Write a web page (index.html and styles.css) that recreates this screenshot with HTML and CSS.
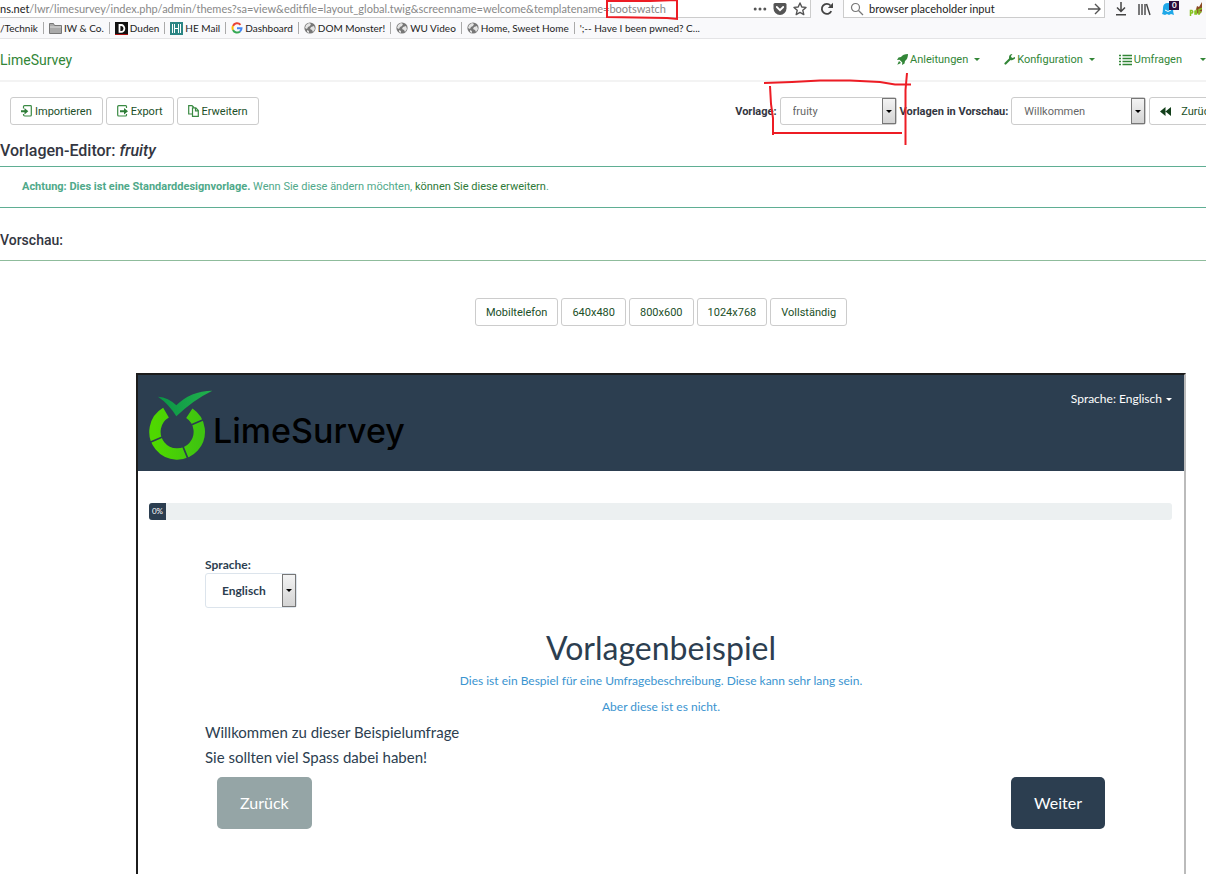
FILE: index.html
```
<!DOCTYPE html>
<html lang="de">

<head>
  <meta charset="UTF-8">
  <meta name="viewport" content="width=device-width, initial-scale=1.0">
  <title>LimeSurvey - Vorlagen-Editor</title>
  <link rel="stylesheet" href="styles.css">
</head>

<body>
  <!-- shared icons -->
  <svg class="sprite" width="0" height="0" aria-hidden="true">
    <symbol id="globe" viewBox="0 0 12 12">
      <circle cx="6" cy="6" r="5.6" fill="#777" />
      <path d="M2 3l3-2 2 1-1 2-2 1-1 2-2-1zM7 5l3-1 1 3-2 3-1-2-2-1zM3 8l2 1v2L3 10z" fill="#e4e4e4" />
    </symbol>
    <symbol id="caret" viewBox="0 0 6 3">
      <path d="M0 0h6L3 3z" fill="currentColor" />
    </symbol>
  </svg>

  <div class="browser">
    <div class="address-row">
      <div class="url-box">
        <label class="url-domain" for="url">ns.net</label>
        <input class="url-input" type="text" id="url" value="/lwr/limesurvey/index.php/admin/themes?sa=view&amp;editfile=layout_global.twig&amp;screenname=welcome&amp;templatename=bootswatch">
        <button class="icon-button" aria-label="Mehr">
          <svg width="14" height="14" viewBox="0 0 14 14" fill="#555"><circle cx="2.2" cy="7" r="1.5" /><circle cx="7" cy="7" r="1.5" /><circle cx="11.8" cy="7" r="1.5" /></svg>
        </button>
        <button class="icon-button" aria-label="Pocket">
          <svg width="14" height="14" viewBox="0 0 14 14"><path d="M2 1h10q1.500 0 1.500 1.500V6.500a6.500 6.500 0 0 1-13 0V2.500Q.5 1 2 1z" fill="#555" /><path d="M3.800 5L7 8.200 10.200 5" fill="none" stroke="#fff" stroke-width="1.800" stroke-linecap="round" /></svg>
        </button>
        <button class="icon-button" aria-label="Lesezeichen">
          <svg width="14" height="14" viewBox="0 0 14 14"><path d="M7 1l1.800 4 4.200.4-3.200 2.900 1 4.300L7 10.400l-3.800 2.200 1-4.300L1 5.400 5.200 5z" fill="none" stroke="#555" stroke-width="1.400" stroke-linejoin="round" /></svg>
        </button>
      </div>
      <button class="icon-button reload" aria-label="Neu laden">
        <svg width="14" height="14" viewBox="0 0 14 14"><path d="M11.300 9.200A5 5 0 1 1 10.500 3.500" fill="none" stroke="#444" stroke-width="1.800" /><path d="M13 .8V6H7.800z" fill="#444" /></svg>
      </button>
      <div class="search-box">
        <svg width="14" height="14" viewBox="0 0 14 14" fill="none" stroke="#777" stroke-width="1.200"><circle cx="5.500" cy="5.500" r="4" /><path d="M8.500 8.500L13 13" /></svg>
        <input class="search-input" type="text" aria-label="Suchen" value="browser placeholder input">
        <button class="icon-button" aria-label="Suche starten">
          <svg width="14" height="14" viewBox="0 0 14 14"><path d="M1 7h12M8 2l5 5-5 5" fill="none" stroke="#555" stroke-width="1.400" /></svg>
        </button>
      </div>
      <div class="browser-tools">
        <button class="icon-button" aria-label="Downloads">
          <svg width="14" height="14" viewBox="0 0 14 14"><path d="M7 0v9M3 5.500L7 9.500l4-4M2 12.800h10" fill="none" stroke="#444" stroke-width="1.500" /></svg>
        </button>
        <button class="icon-button" aria-label="Bibliothek">
          <svg width="14" height="14" viewBox="0 0 14 14"><path d="M2 2v11M5 2v11M8 2v11M9.500 2l3.500 11" fill="none" stroke="#444" stroke-width="1.400" /></svg>
        </button>
        <button class="icon-button" aria-label="Ghostery">
          <svg width="20" height="16" viewBox="0 0 20 16"><path d="M2 13q1-2 1-6 0-5 5-5t5 5 1 7l-3-1-2 1-2-1-2 1z" fill="#1fa8e8" /><path d="M5 9q3 3 6 0" fill="none" stroke="#fff" /><path d="M9 0h10v9H9z" fill="#2c0d3c" /><text class="badge-text" x="12" y="7">0</text></svg>
        </button>
        <button class="icon-button" aria-label="PDF">
          <svg width="14" height="16" viewBox="0 0 14 16"><path d="M6 12L8 5l2 1 3-5 0 9-2 3z" fill="#8a4a24" /><path d="M1.500 15V9.500h1.500q1.500 1.300 0 2.600H2M6 9.500v3.500h1.500V8.500M10 14V8.500l3-1M10 11h2.500" fill="none" stroke="#86c322" stroke-width="1.500" /></svg>
        </button>
      </div>
    </div>

    <nav class="bookmarks">
      <a href="#">/Technik</a>
      <a href="#"><svg width="13" height="12" viewBox="0 0 13 12"><path d="M.5 1.500h4l1 2h7v8H.5z" fill="#aaa" stroke="#777" /><path d="M1 5h11" stroke="#ddd" /></svg>IW &amp; Co.</a>
      <a href="#"><svg width="13" height="13" viewBox="0 0 13 13"><path d="M0 0h13v13H0z" fill="#111" /><path d="M0 12h13v1H0z" fill="#a11" /><path d="M4.500 3h1.800a3 3.300 0 0 1 0 6.800H4.500z" fill="none" stroke="#fff" stroke-width="1.800" /></svg>Duden</a>
      <a href="#"><svg width="13" height="13" viewBox="0 0 13 13"><path d="M0 0h13v13H0z" fill="#2b8584" /><path d="M2.500 2v9M4.500 2v9M8.500 2v9M10.500 2v9M4.500 6.500h4" stroke="#fff" fill="none" /></svg>HE Mail</a>
      <a href="#"><svg width="12" height="12" viewBox="0 0 12 12" fill="none" stroke-width="2"><path d="M9.500 2.800A4.500 4.500 0 0 0 2 4" stroke="#e94335" /><path d="M2 4a4.500 4.500 0 0 0 0 4" stroke="#fbbc05" /><path d="M2 8a4.500 4.500 0 0 0 7 1.500" stroke="#34a853" /><path d="M9 9.500a4.500 4.500 0 0 0 1.500-3.300H6" stroke="#4285f4" /></svg>Dashboard</a>
      <a href="#"><svg width="12" height="12"><use href="#globe" /></svg>DOM Monster!</a>
      <a href="#"><svg width="12" height="12"><use href="#globe" /></svg>WU Video</a>
      <a href="#"><svg width="12" height="12"><use href="#globe" /></svg>Home, Sweet Home</a>
      <a href="#">';-- Have I been pwned? C...</a>
    </nav>
  </div>

  <header class="navbar">
    <a class="brand" href="#">LimeSurvey</a>
    <nav class="menu">
      <a href="#"><svg width="11" height="11" viewBox="0 0 11 11"><path d="M11 0Q6 0 4 3L1.500 3.500 0 6l2.500-.3L5.300 8.500 5 11l2.500-1.500L8 7q3-2 3-7zM2 7L.3 10.700 4 9z" fill="currentColor" /></svg>Anleitungen<svg class="caret" width="6" height="3"><use href="#caret" /></svg></a>
      <a href="#"><svg width="11" height="11" viewBox="0 0 11 11"><path d="M1.500 9.500L6.500 4.500" stroke="currentColor" stroke-width="2.200" stroke-linecap="round" /><path d="M8.500 0Q5 0 5 3.500T8.500 6 11 3L8.500 4 7 3l.3-1.500z" fill="currentColor" /></svg>Konfiguration<svg class="caret" width="6" height="3"><use href="#caret" /></svg></a>
      <a href="#"><svg width="13" height="12" viewBox="0 0 13 12"><path d="M0 1.500h2M3.500 1.500H13M0 4.500h2M3.500 4.500H13M0 7.500h2M3.500 7.500H13M0 10.500h2M3.500 10.500H13" stroke="currentColor" stroke-width="1.600" /></svg>Umfragen<svg class="caret caret-far" width="6" height="3"><use href="#caret" /></svg></a>
    </nav>
  </header>

  <main>
    <div class="toolbar">
      <button class="btn"><svg width="11" height="12" viewBox="0 0 11 12"><path d="M2.500 3.500v-2Q2.500.7 3.500.7h6q.8 0 .8.800v8.500q0 1-1 1h-5.500q-1.300 0-1.300-1.500V9" fill="none" stroke="#3a8a43" stroke-width="1.200" /><path d="M0 5.200h3.500V3l3.800 3.200L3.500 9.400V7.300H0z" fill="#2e7d37" /></svg>Importieren</button>
      <button class="btn"><svg width="11" height="12" viewBox="0 0 11 12"><path d="M9.500 3V1.500q0-.8-.8-.8h-7q-1 0-1 1V10q0 1 1 1h6.800q1 0 1-1V9" fill="none" stroke="#3a8a43" stroke-width="1.200" /><path d="M3 5.200h4V3l4 3.200L7 9.400V7.300H3z" fill="#2e7d37" /></svg>Export</button>
      <button class="btn"><svg width="11" height="12" viewBox="0 0 11 12" fill="none" stroke="#3a8a43" stroke-width="1.200"><path d="M4 9H.7V.7H4L6 2.500" /><path d="M4.500 2.800h3.300l2.500 2.600v5.900H4.500zM7.500 3v2.800h2.600" /></svg>Erweitern</button>
      <div class="toolbar-right">
        <label for="template">Vorlage:</label>
        <div class="select select-template">
          <select id="template">
            <option>fruity</option>
            <option>bootswatch</option>
          </select>
          <span class="arrow"><svg width="6" height="3"><use href="#caret" /></svg></span>
        </div>
        <label for="screen">Vorlagen in Vorschau:</label>
        <div class="select select-screen">
          <select id="screen">
            <option>Willkommen</option>
          </select>
          <span class="arrow"><svg width="6" height="3"><use href="#caret" /></svg></span>
        </div>
        <button class="btn btn-back"><svg width="11" height="9" viewBox="0 0 11 9"><path d="M5.500 0v9L0 4.500zM11 0v9L5.500 4.500z" fill="#123f1a" /></svg>Zurück</button>
      </div>
    </div>

    <h1 class="page-title">Vorlagen-Editor: <em>fruity</em></h1>
    <div class="alert"><strong>Achtung: Dies ist eine Standarddesignvorlage.</strong> Wenn Sie diese ändern möchten, <a href="#">können Sie diese erweitern</a>.</div>
    <h2 class="section-title">Vorschau:</h2>

    <section class="preview">
      <div class="sizes">
        <button class="btn">Mobiltelefon</button>
        <button class="btn">640x480</button>
        <button class="btn">800x600</button>
        <button class="btn">1024x768</button>
        <button class="btn">Vollständig</button>
      </div>

      <div class="frame">
        <div class="survey-header">
          <div class="logo">
            <svg width="65" height="72" viewBox="55 85 195 216">
              <defs>
                <linearGradient id="leaf"><stop offset="0" stop-color="#0a9446" /><stop offset="1" stop-color="#22b24c" /></linearGradient>
                <linearGradient id="ring"><stop offset="0" stop-color="#4fd800" /><stop offset="1" stop-color="#3fc410" /></linearGradient>
              </defs>
              <path d="M179 158A66.500 66.500 0 1 1 109 156" fill="none" stroke="url(#ring)" stroke-width="34" />
              <path d="M184 193L226 175M58 246L100 228M160 258L178 302" stroke="#2c3e50" stroke-width="5" />
              <path d="M85 108Q116 110 140 134Q182 91 248 90Q190 118 140 167Q118 130 85 108z" fill="url(#leaf)" />
            </svg>
            <span>LimeSurvey</span>
          </div>
          <a class="language-link" href="#">Sprache: Englisch<svg class="caret" width="6" height="3"><use href="#caret" /></svg></a>
        </div>
        <div class="progress"><div class="progress-bar">0%</div></div>

        <form class="survey">
          <label class="language-label" for="language">Sprache:</label>
          <div class="select select-language">
            <select id="language">
              <option>Englisch</option>
            </select>
            <span class="arrow"><svg width="6" height="3"><use href="#caret" /></svg></span>
          </div>
          <h1 class="survey-title">Vorlagenbeispiel</h1>
          <p class="description">Dies ist ein Bespiel für eine Umfragebeschreibung. Diese kann sehr lang sein.</p>
          <p class="description">Aber diese ist es nicht.</p>
          <p class="welcome">Willkommen zu dieser Beispielumfrage<br>Sie sollten viel Spass dabei haben!</p>
          <div class="survey-buttons">
            <button type="button" class="survey-btn btn-previous">Zurück</button>
            <button type="button" class="survey-btn">Weiter</button>
          </div>
        </form>
      </div>
    </section>
  </main>

  <!-- red pen marks over the page -->
  <svg class="marks" width="1206" height="150" viewBox="0 0 1206 150" aria-hidden="true">
    <path d="M606 1H650L677 0V19L667 18 607 17V1" />
    <path d="M764 83L792 82 820 80.500H850L880 82 895 84.500H911M770 86L771 104 773 118V135M772 133H902M907 73L905.500 90V145" />
  </svg>
</body>

</html>
```
FILE: styles.css
```
* {
  box-sizing: border-box;
}

body {
  margin: 0;
  position: relative;
  overflow-x: hidden;
  background: #fff;
  color: #333641;
  font-family: Roboto, "Liberation Sans", sans-serif;
  font-size: 11px;
}

a {
  color: inherit;
  text-decoration: none;
}

button,
input,
select {
  font: inherit;
  color: inherit;
}

svg {
  flex: none;
}

.sprite {
  position: absolute;
}

/* browser bars */
.browser {
  background: #f9f9fb;
  border-bottom: 1px solid #e4e4e6;
  color: #222;
  font-family: Lato, "Open Sans", sans-serif;
  white-space: nowrap;
}

.address-row {
  display: flex;
  height: 18px;
}

.url-box,
.search-box {
  display: flex;
  align-items: center;
  background: #fff;
  border: 1px solid #ccc;
  border-top: 0;
}

.url-box {
  flex: 1;
  border-left: 0;
  gap: 6px;
  padding-right: 3px;
}

.url-input,
.search-input {
  flex: 1;
  min-width: 0;
  padding: 0;
  border: 0;
  background: none;
  outline: 0;
}

.url-input {
  color: #888;
  margin-left: -6px;
}

.icon-button {
  display: flex;
  padding: 0;
  border: 0;
  background: none;
}

.reload {
  align-items: center;
  padding: 0 9px;
}

.search-box {
  width: 262px;
  gap: 5px;
  padding: 0 3px 0 6px;
}

.browser-tools {
  display: flex;
  align-items: center;
  gap: 9px;
  padding: 0 3px 0 9px;
}

.badge-text {
  fill: #fff;
  font-size: 8px;
  font-weight: bold;
}

.bookmarks {
  display: flex;
  align-items: center;
  height: 20px;
  font-size: 10px;
}

.bookmarks a {
  display: flex;
  align-items: center;
  gap: 2px;
  height: 12px;
  padding: 0 5px;
  border-left: 1px solid #aaa;
}

.bookmarks a:first-child {
  padding-left: 0;
  border-left: 0;
}

/* admin navigation */
.navbar {
  display: flex;
  align-items: center;
  justify-content: space-between;
  height: 43px;
  border-bottom: 2px solid #f3f3f3;
  color: #328637;
  white-space: nowrap;
}

.brand {
  font-size: 14px;
}

.menu {
  display: flex;
  gap: 24px;
}

.menu a {
  display: flex;
  align-items: center;
  gap: 2px;
}

.caret {
  margin-left: 4px;
}

.caret-far {
  margin-left: 16px;
}

/* toolbar */
.toolbar {
  display: flex;
  gap: 3px;
  margin: 15px -20px 0 10px;
  white-space: nowrap;
}

.btn {
  display: flex;
  align-items: center;
  gap: 3px;
  height: 28px;
  padding: 0 10px;
  background: #fff;
  border: 1px solid #ccc;
  border-radius: 3px;
  color: #214f28;
}

.btn-back {
  gap: 10px;
}

.toolbar-right {
  display: flex;
  align-items: center;
  gap: 3px;
  margin-left: auto;
  font-weight: bold;
}

.toolbar-right .btn {
  font-weight: normal;
}

.select {
  display: flex;
  height: 28px;
  border: 1px solid #ccc;
  border-radius: 3px;
}

.select select {
  flex: 1;
  min-width: 0;
  padding: 0 0 0 12px;
  border: 0;
  background: none;
  color: #666;
  font-weight: normal;
  appearance: none;
}

.select-template {
  width: 117px;
}

.select-screen {
  width: 135px;
}

.arrow {
  display: flex;
  align-items: center;
  justify-content: center;
  width: 14px;
  background: linear-gradient(#f3f3f3, #d4d4d4);
  border: 1px solid #777;
  color: #000;
}

.page-title,
.section-title {
  margin: 0;
  font-weight: 500;
}

.page-title {
  margin-top: 16px;
  font-size: 16px;
  line-height: 20px;
}

.alert {
  margin-top: 5px;
  padding: 0 22px;
  border: solid #5fae93;
  border-width: 1px 0;
  color: #4fa98a;
  line-height: 40px;
}

.alert a {
  color: #2e7a38;
}

.section-title {
  margin-top: 22px;
  font-size: 14px;
  line-height: 20px;
}

/* preview */
.preview {
  margin-top: 10px;
  padding: 37px 20px 0 136px;
  border-top: 1px solid #8fbc9c;
}

.sizes {
  display: flex;
  justify-content: center;
  gap: 3px;
}

.frame {
  min-height: 502px;
  margin-top: 47px;
  border: 2px solid #1c1c1c;
  border-right-color: #bbb;
  border-bottom: 0;
  color: #2c3e50;
  font-family: Lato, sans-serif;
  font-size: 12px;
}

.survey-header {
  display: flex;
  justify-content: space-between;
  align-items: flex-start;
  height: 96px;
  padding: 14px 12px 0 10px;
  background: #2c3e50;
}

.logo {
  display: flex;
  align-items: center;
  color: #000;
  font-family: Inter, sans-serif;
  font-size: 34px;
  font-weight: 500;
}

.logo span {
  padding-top: 12px;
  line-height: 60px;
}

.language-link {
  display: flex;
  align-items: center;
  color: #fff;
  line-height: 20px;
}

.progress {
  margin: 32px 12px 0 11px;
  background: #ecf0f1;
  border-radius: 3px;
}

.progress-bar {
  width: 17px;
  background: #2c3e50;
  border-radius: 3px 0 0 3px;
  color: #fff;
  font-size: 8px;
  line-height: 17px;
  text-align: center;
}

.survey {
  margin: 36px 67px 0;
}

.language-label {
  display: block;
  font-weight: bold;
  line-height: 17px;
}

.select-language {
  width: 92px;
  height: 35px;
  border-color: #dce4ec;
}

.select-language select {
  padding-left: 16px;
  color: #2c3e50;
  font-weight: bold;
}

.survey-title {
  margin: 20px 0 0;
  font-size: 32px;
  font-weight: normal;
  line-height: 40px;
  text-align: center;
}

.description {
  margin: 0;
  color: #3a94d0;
  line-height: 26px;
  text-align: center;
}

.welcome {
  margin: 0;
  font-size: 15px;
  line-height: 25px;
}

.survey-buttons {
  display: flex;
  justify-content: space-between;
  margin: 7px 12px 0;
}

.survey-btn {
  padding: 0 23px;
  background: #2c3e50;
  border: 0;
  border-radius: 5px;
  color: #fff;
  font-size: 16px;
  line-height: 52px;
}

.btn-previous {
  background: #95a5a6;
}

/* pen marks */
.marks {
  position: absolute;
  top: 0;
  left: 0;
  fill: none;
  stroke: #ed1c24;
  stroke-width: 2;
  pointer-events: none;
}
```
